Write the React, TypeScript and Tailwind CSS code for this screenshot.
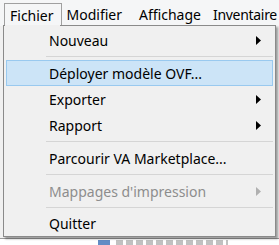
import React from "react";

const font = { fontFamily: '"Noto Sans", "Segoe UI", sans-serif' };

type Item =
  | { kind: "item"; label: string; sub?: boolean; disabled?: boolean; active?: boolean; h?: string }
  | { kind: "sep" };

const items: Item[] = [
  { kind: "item", label: "Nouveau", sub: true },
  { kind: "sep" },
  { kind: "item", label: "Déployer modèle OVF...", active: true },
  { kind: "item", label: "Exporter", sub: true },
  { kind: "item", label: "Rapport", sub: true },
  { kind: "sep" },
  { kind: "item", label: "Parcourir VA Marketplace..." },
  { kind: "sep" },
  { kind: "item", label: "Mappages d'impression", sub: true, disabled: true },
  { kind: "sep" },
  { kind: "item", label: "Quitter", h: "h-[25px]" },
];

function Arrow({ disabled }: { disabled?: boolean }) {
  return (
    <svg width="5" height="9" viewBox="0 0 5 9" className="shrink-0">
      <path d="M0 0 L5 4.5 L0 9 Z" fill={disabled ? "#b0b0b0" : "#000"} />
    </svg>
  );
}

export default function App() {
  return (
    <div className="relative h-[245px] w-[279px] overflow-hidden bg-[#f0f0f0] text-[14px]" style={font}>
      {/* menu bar */}
      <div className="flex h-[26px] items-end bg-[#f5f6f7] pl-[4px] text-black">
        <div className="flex h-[23px] items-center border border-b-0 border-[#a0a0a0] bg-[#f5f6f7] pl-[5px] pr-[7px]">Fichier</div>
        <div className="flex h-[23px] items-center pl-[5px] pr-[11px]">Modifier</div>
        <div className="flex h-[23px] items-center pl-[6px] pr-[6px]">Affichage</div>
        <div className="flex h-[23px] items-center whitespace-nowrap pl-[6px] tracking-[-0.3px]">Inventaire</div>
      </div>

      {/* content behind the menu */}
      <div className="flex h-[219px] flex-col justify-end bg-[#f0f0f0]">
        <div className="flex h-[7px] items-start overflow-hidden border-t border-[#9a9a9a] bg-white pl-[98px]">
          <span className="mr-[6px] mt-[1px] h-[10px] w-[12px] bg-[#3b6fb6] opacity-80" />
          <span className="mt-[1px] h-[5px] w-[112px] bg-[repeating-linear-gradient(90deg,#666_0_7px,transparent_7px_10px)] opacity-40 blur-[0.5px]" />
        </div>
      </div>

      {/* dropdown */}
      <div className="absolute left-[3px] top-[25px] w-[273px] border border-[#8a8a8a] bg-[#f0f0f0] pt-[1px] shadow-[2px_2px_2px_rgba(0,0,0,0.35)]">
        <div className="absolute -top-px left-px h-[2px] w-[55px] bg-[#f0f0f0]" />
        {items.map((it, i) =>
          it.kind === "sep" ? (
            <div key={i} className="flex h-[7px] items-center pl-[42px] pr-[2px]">
              <div className="h-px w-full bg-[#d5d5d5]" />
            </div>
          ) : (
            <div
              key={i}
              className={`mx-[2px] flex ${it.h ?? "h-[26px]"} items-center border pl-[42px] pr-[11px] ${
                it.active ? "border-[#99c9ef] bg-[#cce4f7]" : "border-transparent"
              } ${it.disabled ? "text-[#8d8d8d]" : "text-black"}`}
            >
              <span className="flex-1 whitespace-nowrap">{it.label}</span>
              {it.sub && <Arrow disabled={it.disabled} />}
            </div>
          )
        )}
      </div>
    </div>
  );
}
